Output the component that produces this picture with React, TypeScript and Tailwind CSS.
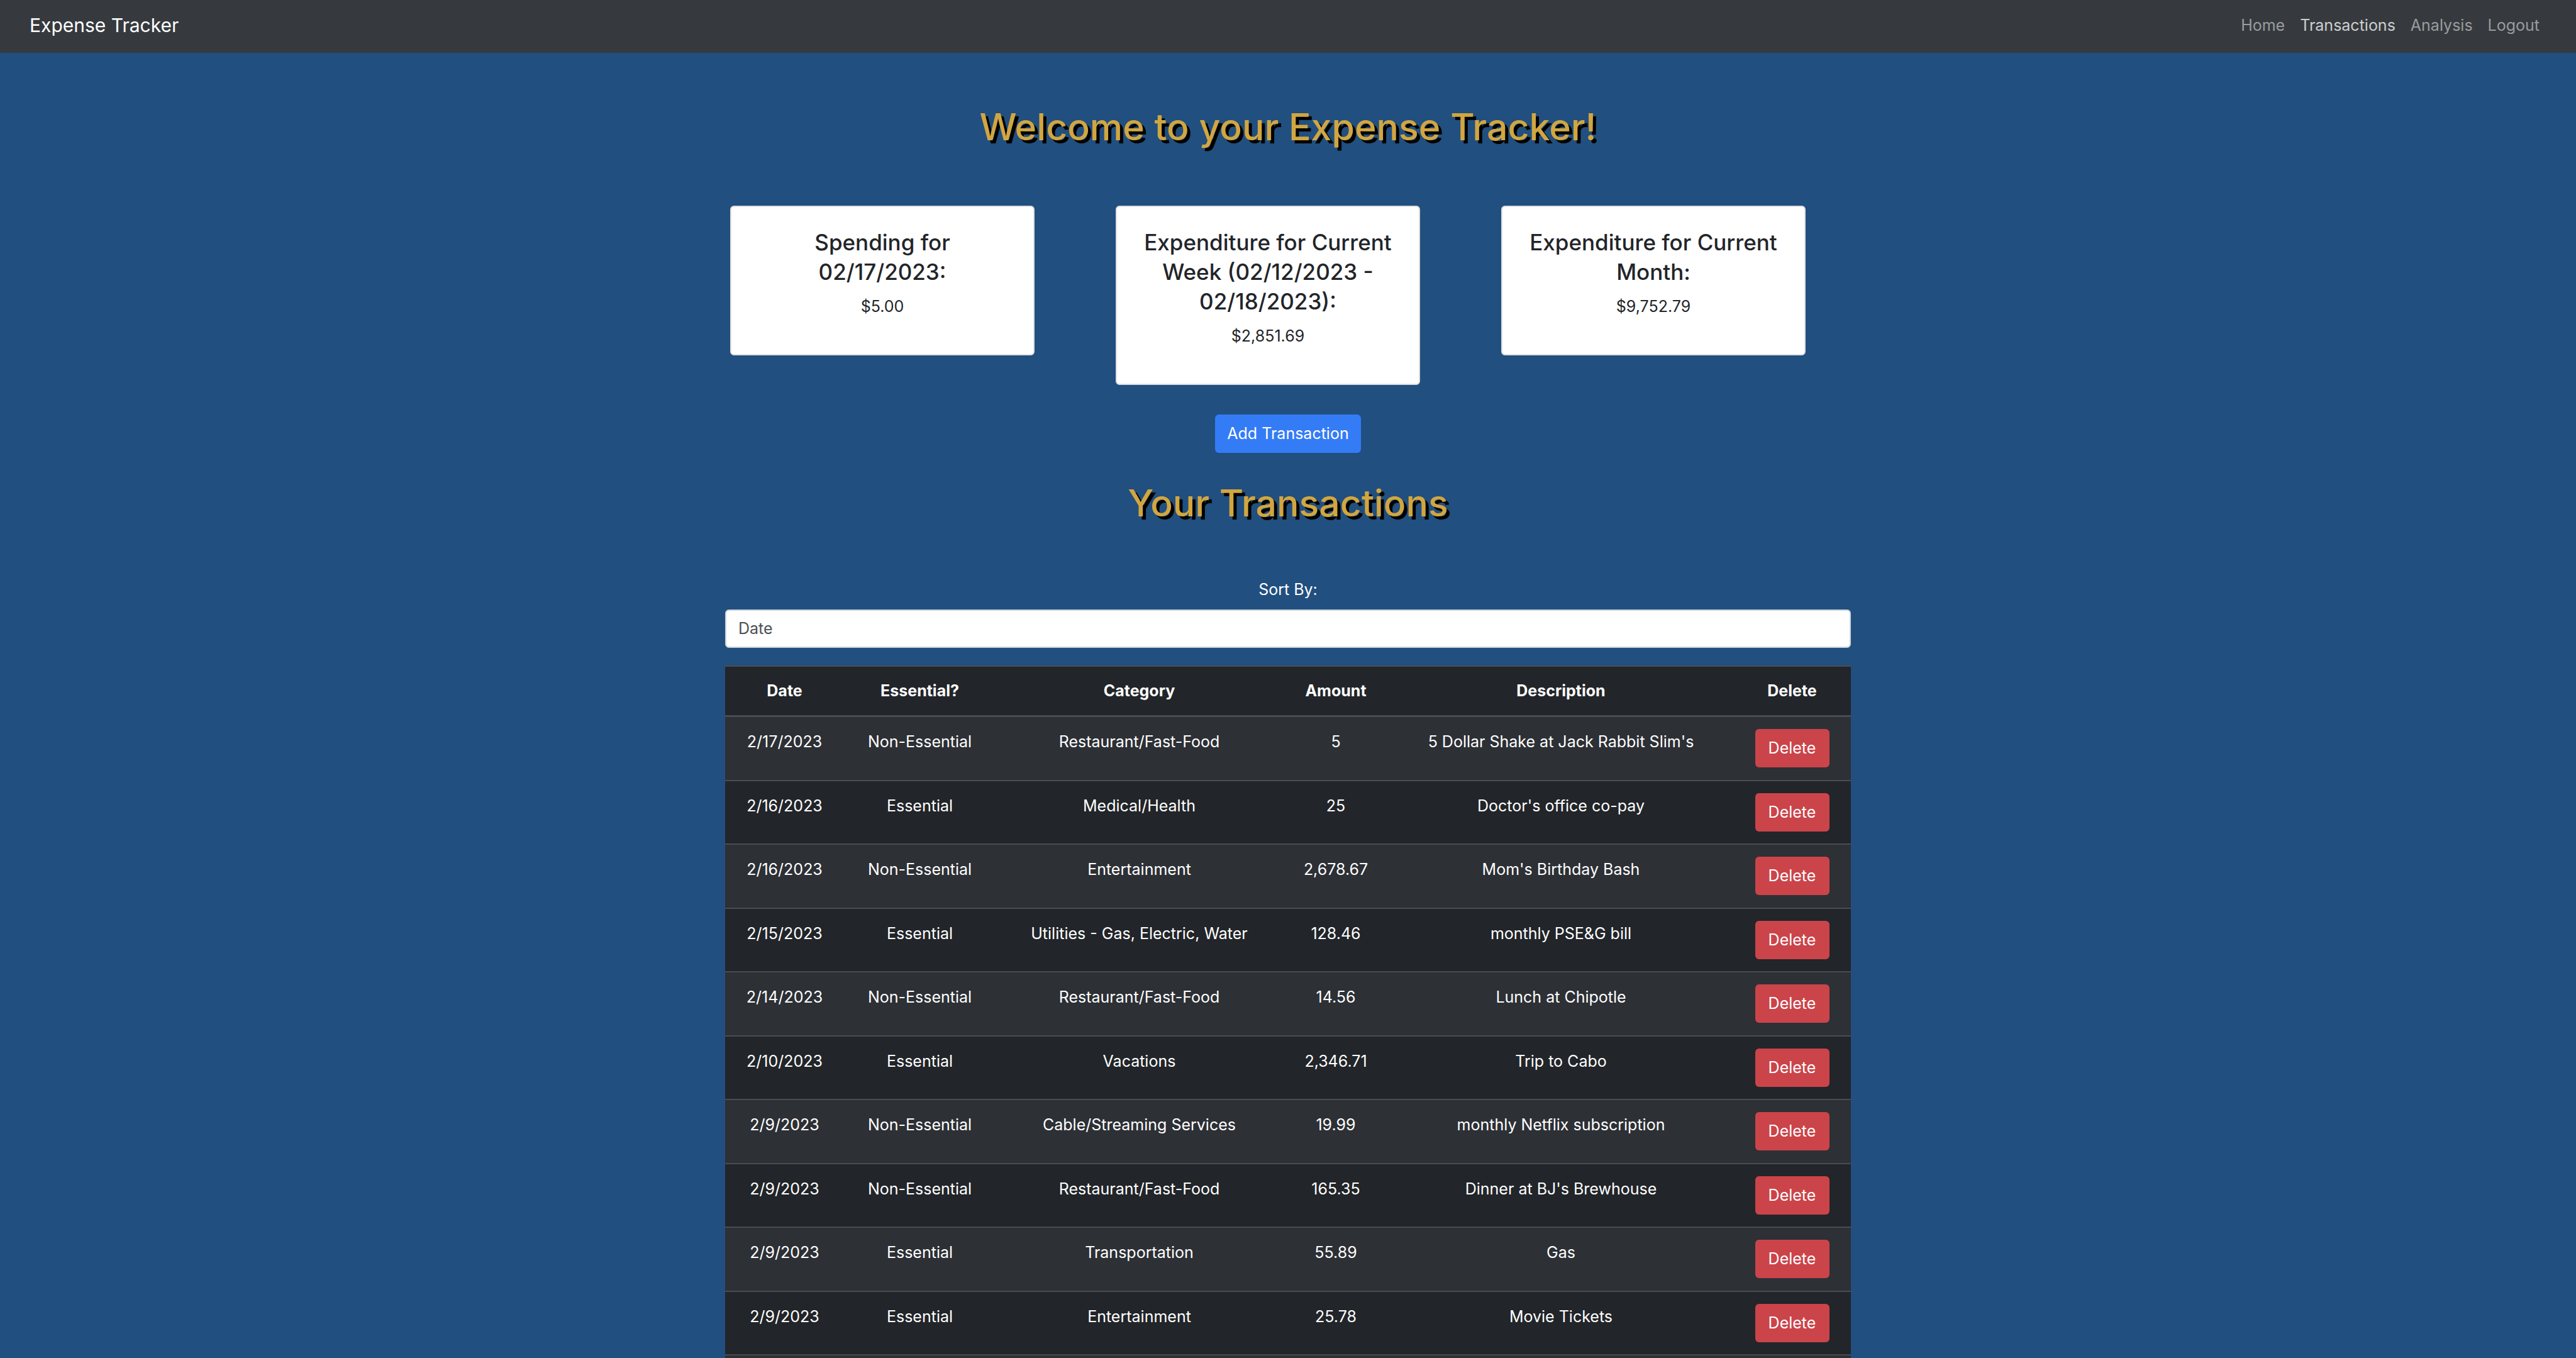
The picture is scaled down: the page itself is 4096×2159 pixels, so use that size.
type Transaction = {
  date: string;
  essential: string;
  category: string;
  amount: string;
  description: string;
};

const links = [
  { label: "Home", active: false },
  { label: "Transactions", active: true },
  { label: "Analysis", active: false },
  { label: "Logout", active: false },
];

const summaries = [
  { title: "Spending for 02/17/2023:", value: "$5.00" },
  { title: "Expenditure for Current Week (02/12/2023 - 02/18/2023):", value: "$2,851.69" },
  { title: "Expenditure for Current Month:", value: "$9,752.79" },
];

const transactions: Transaction[] = [
  { date: "2/17/2023", essential: "Non-Essential", category: "Restaurant/Fast-Food", amount: "5", description: "5 Dollar Shake at Jack Rabbit Slim's" },
  { date: "2/16/2023", essential: "Essential", category: "Medical/Health", amount: "25", description: "Doctor's office co-pay" },
  { date: "2/16/2023", essential: "Non-Essential", category: "Entertainment", amount: "2,678.67", description: "Mom's Birthday Bash" },
  { date: "2/15/2023", essential: "Essential", category: "Utilities - Gas, Electric, Water", amount: "128.46", description: "monthly PSE&G bill" },
  { date: "2/14/2023", essential: "Non-Essential", category: "Restaurant/Fast-Food", amount: "14.56", description: "Lunch at Chipotle" },
  { date: "2/10/2023", essential: "Essential", category: "Vacations", amount: "2,346.71", description: "Trip to Cabo" },
  { date: "2/9/2023", essential: "Non-Essential", category: "Cable/Streaming Services", amount: "19.99", description: "monthly Netflix subscription" },
  { date: "2/9/2023", essential: "Non-Essential", category: "Restaurant/Fast-Food", amount: "165.35", description: "Dinner at BJ's Brewhouse" },
  { date: "2/9/2023", essential: "Essential", category: "Transportation", amount: "55.89", description: "Gas" },
  { date: "2/9/2023", essential: "Essential", category: "Entertainment", amount: "25.78", description: "Movie Tickets" },
];

function Navbar() {
  return (
    <nav className="flex items-center justify-between bg-[#363a3e] pt-4 pb-5 pl-[47px] pr-[58px]">
      <a href="#" className="text-[30px] leading-[48px] text-white">
        Expense Tracker
      </a>
      <ul className="flex gap-6">
        {links.map((link) => (
          <li key={link.label}>
            <a
              href="#"
              className={link.active ? "text-[#cdced0]" : "text-[#9a9c9e]"}
            >
              {link.label}
            </a>
          </li>
        ))}
      </ul>
    </nav>
  );
}

function Title({ children }: { children: string }) {
  return (
    <h1 className="text-center text-[59px] leading-[77px] font-medium text-[#d1a641] [text-shadow:5px_5px_0_#000]">
      {children}
    </h1>
  );
}

function SummaryCard({ title, value }: { title: string; value: string }) {
  return (
    <section className="w-[484px] rounded-md border-2 border-[#dfdfdf] bg-white px-8 pt-[33px] pb-14 text-center text-[#222529]">
      <h2 className="text-[35px] leading-[47px] font-medium">{title}</h2>
      <p className="mt-3">{value}</p>
    </section>
  );
}

function TransactionTable() {
  return (
    <table className="mt-7 w-full table-fixed border-collapse bg-[#222529] text-center text-white">
      <colgroup>
        <col className="w-[189px]" />
        <col className="w-[241px]" />
        <col className="w-[457px]" />
        <col className="w-[168px]" />
        <col />
        <col className="w-[187px]" />
      </colgroup>
      <thead>
        <tr className="border-t-2 border-b-3 border-[#474d54]">
          {["Date", "Essential?", "Category", "Amount", "Description", "Delete"].map((name) => (
            <th key={name} scope="col" className="py-[19px] font-bold">
              {name}
            </th>
          ))}
        </tr>
      </thead>
      <tbody>
        {transactions.map((t, i) => (
          <tr key={i} className="group border-b-2 border-[#474d54] align-top odd:bg-[#2d3035]">
            <td className="pt-5">{t.date}</td>
            <td className="pt-5">{t.essential}</td>
            <td className="pt-5">{t.category}</td>
            <td className="pt-5">{t.amount}</td>
            <td className="pt-5">{t.description}</td>
            <td className="pt-[19px] pb-[19px] group-odd:pb-5">
              <button type="button" className="block mx-auto h-[61px] w-[118px] rounded-md bg-[#cb444a]">
                Delete
              </button>
            </td>
          </tr>
        ))}
        <tr className="h-[101px] bg-[#2d3035]">
          <td colSpan={6} />
        </tr>
      </tbody>
    </table>
  );
}

export default function App() {
  return (
    <div className="h-screen overflow-hidden bg-[#214f7f] font-['Inter',sans-serif] text-[25px] leading-[39px]">
      <Navbar />
      <main className="mx-auto flex max-w-[1790px] flex-col pt-[79px]">
        <Title>Welcome to your Expense Tracker!</Title>
        <div className="mt-[87px] flex items-start gap-[129px] pl-2">
          {summaries.map((s) => (
            <SummaryCard key={s.title} title={s.title} value={s.value} />
          ))}
        </div>
        <button
          type="button"
          className="mt-[47px] mb-[41px] h-[61px] w-[232px] self-center rounded-md bg-[#347cf6] text-white"
        >
          Add Transaction
        </button>
        <Title>Your Transactions</Title>
        <label htmlFor="sort" className="mt-20 text-center text-white">
          Sort By:
        </label>
        <select
          id="sort"
          defaultValue="Date"
          className="mt-3 h-[61px] w-full appearance-none rounded-md border-2 border-[#ced4da] bg-white px-[19px] text-[#4b5056]"
        >
          <option>Date</option>
          <option>Amount</option>
          <option>Category</option>
        </select>
        <TransactionTable />
      </main>
    </div>
  );
}
